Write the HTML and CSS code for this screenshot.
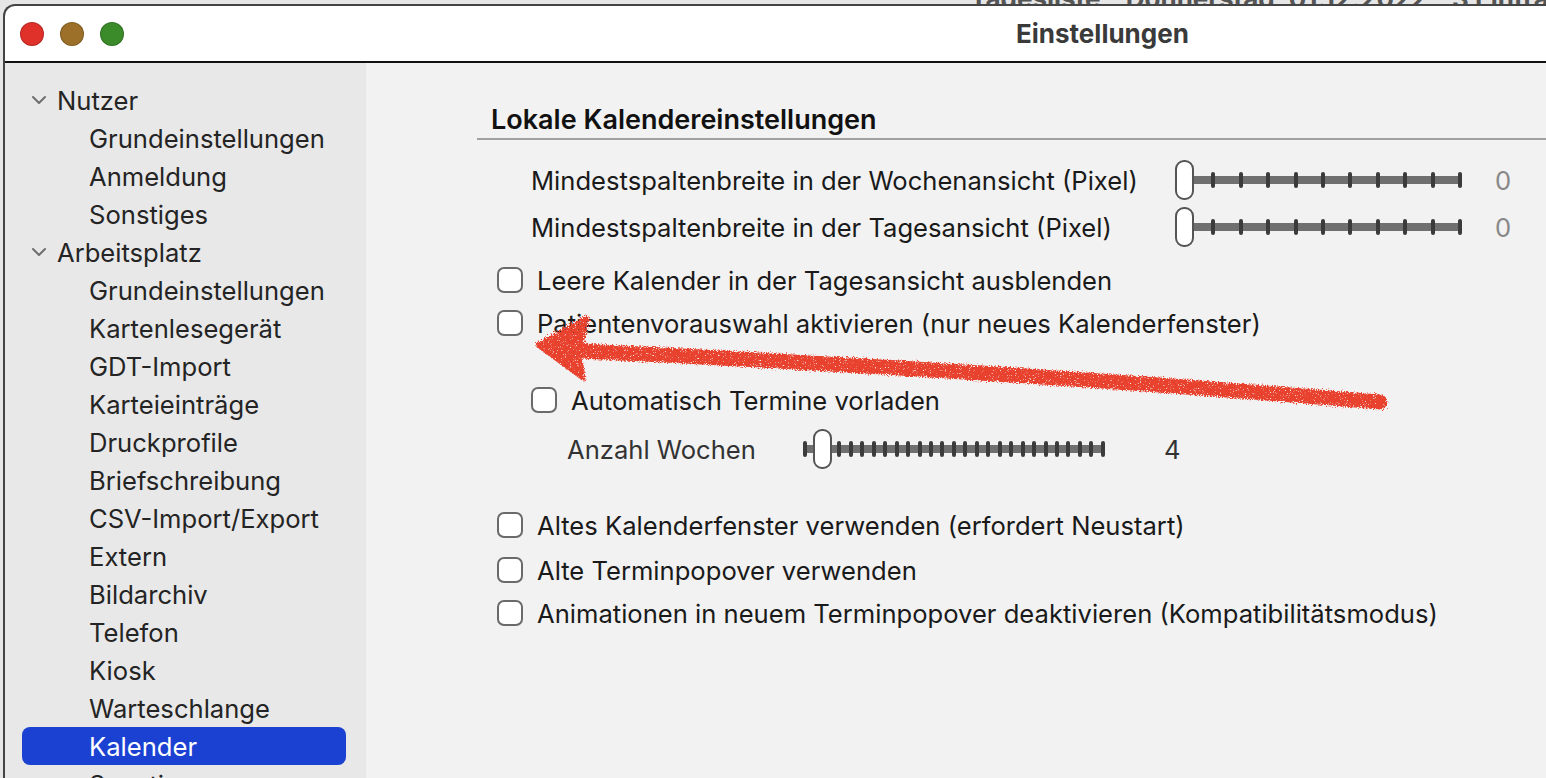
FILE: index.html
```html
<!DOCTYPE html>
<html lang="de">
<head>
    <meta charset="UTF-8">
    <title>Einstellungen</title>
    <link rel="stylesheet" href="styles.css">
</head>
<body>
    <!-- Fenster im Hintergrund -->
    <div class="backdrop-title">Tagesliste – Donnerstag, 01.12.2022 – 3 Einträge</div>

    <div class="window">
        <div class="titlebar">
            <div class="traffic">
                <span class="light red"></span>
                <span class="light yellow"></span>
                <span class="light green"></span>
            </div>
            <div class="title">Einstellungen</div>
        </div>

        <div class="main">
            <!-- Seitenleiste -->
            <nav class="sidebar">
                <div class="nav-row group">
                    <svg class="chevron" width="16" height="10" viewBox="0 0 16 10"><path d="M2 2 L8 8 L14 2" fill="none" stroke="#6e6e6e" stroke-width="2" stroke-linecap="round" stroke-linejoin="round"/></svg>
                    Nutzer
                </div>
                <div class="nav-row item">Grundeinstellungen</div>
                <div class="nav-row item">Anmeldung</div>
                <div class="nav-row item">Sonstiges</div>
                <div class="nav-row group">
                    <svg class="chevron" width="16" height="10" viewBox="0 0 16 10"><path d="M2 2 L8 8 L14 2" fill="none" stroke="#6e6e6e" stroke-width="2" stroke-linecap="round" stroke-linejoin="round"/></svg>
                    Arbeitsplatz
                </div>
                <div class="nav-row item">Grundeinstellungen</div>
                <div class="nav-row item">Kartenlesegerät</div>
                <div class="nav-row item">GDT-Import</div>
                <div class="nav-row item">Karteieinträge</div>
                <div class="nav-row item">Druckprofile</div>
                <div class="nav-row item">Briefschreibung</div>
                <div class="nav-row item">CSV-Import/Export</div>
                <div class="nav-row item">Extern</div>
                <div class="nav-row item">Bildarchiv</div>
                <div class="nav-row item">Telefon</div>
                <div class="nav-row item">Kiosk</div>
                <div class="nav-row item">Warteschlange</div>
                <div class="nav-row item active">Kalender</div>
                <div class="nav-row item">Sonstiges</div>
            </nav>

            <!-- Einstellungen -->
            <section class="content">
                <h3 class="section-title">Lokale Kalendereinstellungen</h3>

                <div class="slider-row first">
                    <span class="slider-label">Mindestspaltenbreite in der Wochenansicht (Pixel)</span>
                    <div class="slider slider-wide">
                        <div class="track">
                            <span class="tick"></span><span class="tick"></span><span class="tick"></span><span class="tick"></span>
                            <span class="tick"></span><span class="tick"></span><span class="tick"></span><span class="tick"></span>
                            <span class="tick"></span><span class="tick"></span><span class="tick"></span>
                        </div>
                        <span class="thumb"></span>
                    </div>
                    <span class="slider-value muted">0</span>
                </div>

                <div class="slider-row">
                    <span class="slider-label">Mindestspaltenbreite in der Tagesansicht (Pixel)</span>
                    <div class="slider slider-wide">
                        <div class="track">
                            <span class="tick"></span><span class="tick"></span><span class="tick"></span><span class="tick"></span>
                            <span class="tick"></span><span class="tick"></span><span class="tick"></span><span class="tick"></span>
                            <span class="tick"></span><span class="tick"></span><span class="tick"></span>
                        </div>
                        <span class="thumb"></span>
                    </div>
                    <span class="slider-value muted">0</span>
                </div>

                <label class="check-row gap-top">
                    <span class="checkbox"></span>
                    Leere Kalender in der Tagesansicht ausblenden
                </label>
                <label class="check-row">
                    <span class="checkbox"></span>
                    Patientenvorauswahl aktivieren (nur neues Kalenderfenster)
                </label>

                <label class="check-row sub">
                    <span class="checkbox"></span>
                    Automatisch Termine vorladen
                </label>

                <div class="weeks-row">
                    <span class="weeks-label">Anzahl Wochen</span>
                    <div class="slider slider-weeks">
                        <div class="track" id="weeksTrack"></div>
                        <span class="thumb"></span>
                    </div>
                    <span class="weeks-value">4</span>
                </div>

                <label class="check-row gap-large">
                    <span class="checkbox"></span>
                    Altes Kalenderfenster verwenden (erfordert Neustart)
                </label>
                <label class="check-row gap-mid">
                    <span class="checkbox"></span>
                    Alte Terminpopover verwenden
                </label>
                <label class="check-row">
                    <span class="checkbox"></span>
                    Animationen in neuem Terminpopover deaktivieren (Kompatibilitätsmodus)
                </label>
            </section>
        </div>
    </div>

    <!-- Markierung -->
    <svg class="annotation" width="1546" height="778" viewBox="0 0 1546 778">
        <defs>
            <filter id="rough" x="-5%" y="-20%" width="110%" height="140%">
                <feTurbulence type="fractalNoise" baseFrequency="0.8" numOctaves="2" seed="3" result="noise"/>
                <feDisplacementMap in="SourceGraphic" in2="noise" scale="7" result="disp"/>
                <feTurbulence type="fractalNoise" baseFrequency="1.4" numOctaves="1" seed="9" result="grain"/>
                <feColorMatrix in="grain" type="matrix" values="0 0 0 0 0  0 0 0 0 0  0 0 0 0 0  6 0 0 0 -1.3" result="mask"/>
                <feComposite in="disp" in2="mask" operator="in"/>
            </filter>
        </defs>
        <g filter="url(#rough)" fill="#e8432d" stroke="#e8432d">
            <path d="M1380 402 Q 990 370 580 351" fill="none" stroke-width="15" stroke-linecap="round"/>
            <polygon points="538,345 587,318 579,352 583,378" stroke-width="5" stroke-linejoin="round"/>
        </g>
    </svg>

    <script>
        // Teilstriche für den Wochen-Regler
        const weeksTrack = document.getElementById('weeksTrack');
        for (let i = 0; i < 27; i++) {
            const tick = document.createElement('span');
            tick.className = 'tick';
            weeksTrack.appendChild(tick);
        }
    </script>
</body>
</html>
```

FILE: styles.css
```css
body {
    margin: 0;
    width: 1546px;
    height: 778px;
    overflow: hidden;
    position: relative;
    background-color: #e6e6e6;
    font-family: 'Inter', 'Liberation Sans', sans-serif;
}

.backdrop-title {
    position: absolute;
    top: -17px;
    left: 970px;
    font-size: 26px;
    font-weight: bold;
    color: #555;
    white-space: nowrap;
}

.window {
    position: relative;
    z-index: 1;
    margin: 4px 0 0 3px;
    height: 774px;
    border: 2px solid #444;
    border-right: none;
    border-bottom: none;
    border-top-left-radius: 12px;
    background-color: #fff;
    overflow: hidden;
}

.titlebar {
    height: 55px;
    border-bottom: 2px solid #111;
    display: flex;
    align-items: center;
}

.traffic {
    display: flex;
    gap: 16px;
    padding-left: 15px;
}

.light {
    width: 22px;
    height: 22px;
    border-radius: 50%;
    border: 1px solid rgba(0,0,0,0.2);
}

.red { background-color: #e0302a; }
.yellow { background-color: #9c7028; }
.green { background-color: #3b8b2b; }

.title {
    margin-left: 892px;
    font-size: 26px;
    font-weight: bold;
    color: #3a3a3a;
}

.main {
    display: flex;
    height: 717px;
}

/* Seitenleiste */
.sidebar {
    width: 361px;
    box-sizing: border-box;
    padding: 18px 20px 0 17px;
    background-color: #e8e8e8;
    flex-shrink: 0;
}

.nav-row {
    height: 38px;
    display: flex;
    align-items: center;
    font-size: 25.6px;
    color: #242424;
    white-space: nowrap;
    border-radius: 8px;
}

.group {
    padding-left: 9px;
}

.chevron {
    margin-right: 10px;
}

.item {
    padding-left: 67px;
}

.item.active {
    background-color: #1b41d3;
    color: #fff;
}

/* Inhalt */
.content {
    flex: 1;
    background-color: #f2f2f2;
    padding-top: 41px;
    color: #1a1a1a;
    font-size: 25.6px;
}

.section-title {
    margin: 0 0 0 111px;
    padding: 0 0 2px 14px;
    height: 32px;
    line-height: 32px;
    font-size: 27px;
    font-weight: 600;
    color: #111;
    border-bottom: 2px solid #a0a0a0;
}

.slider-row {
    display: flex;
    align-items: center;
    height: 40px;
    padding-left: 165px;
    margin-top: 7px;
}

.slider-row.first {
    margin-top: 20px;
}

.slider-label {
    width: 644px;
    flex-shrink: 0;
    white-space: nowrap;
}

.slider {
    position: relative;
    height: 40px;
    display: flex;
    align-items: center;
    flex-shrink: 0;
}

.track {
    flex: 1;
    height: 8px;
    background-color: #6f6f6f;
    border-radius: 4px;
    display: flex;
    justify-content: space-between;
    align-items: center;
}

.tick {
    width: 4px;
    height: 16px;
    border-radius: 2px;
    background-color: #3b3b3b;
}

.thumb {
    position: absolute;
    top: 0;
    width: 19px;
    height: 40px;
    box-sizing: border-box;
    border: 2px solid #555;
    border-radius: 9px;
    background-color: #fff;
}

.slider-wide {
    width: 287px;
}

.slider-wide .track {
    margin-left: 9px;
}

.slider-wide .thumb {
    left: 0;
}

.slider-value {
    margin-left: 33px;
}

.muted {
    color: #888;
}

.check-row {
    display: flex;
    align-items: center;
    gap: 14px;
    height: 36px;
    padding-left: 131px;
    margin-top: 7px;
    white-space: nowrap;
}

.check-row.gap-top {
    margin-top: 15px;
}

.check-row.sub {
    padding-left: 165px;
    margin-top: 41px;
}

.check-row.gap-large {
    margin-top: 38px;
}

.check-row.gap-mid {
    margin-top: 9px;
}

.checkbox {
    width: 26px;
    height: 26px;
    box-sizing: border-box;
    border: 2px solid #6a6a6a;
    border-radius: 7px;
    background-color: #fff;
    flex-shrink: 0;
}

.weeks-row {
    display: flex;
    align-items: center;
    height: 40px;
    padding-left: 201px;
    margin-top: 11px;
}

.weeks-label {
    width: 236px;
    flex-shrink: 0;
    color: #333;
}

.slider-weeks {
    width: 302px;
}

.slider-weeks .thumb {
    left: 10px;
}

.weeks-value {
    margin-left: 59px;
    color: #333;
}

.annotation {
    position: absolute;
    top: 0;
    left: 0;
    z-index: 2;
    pointer-events: none;
}
```
